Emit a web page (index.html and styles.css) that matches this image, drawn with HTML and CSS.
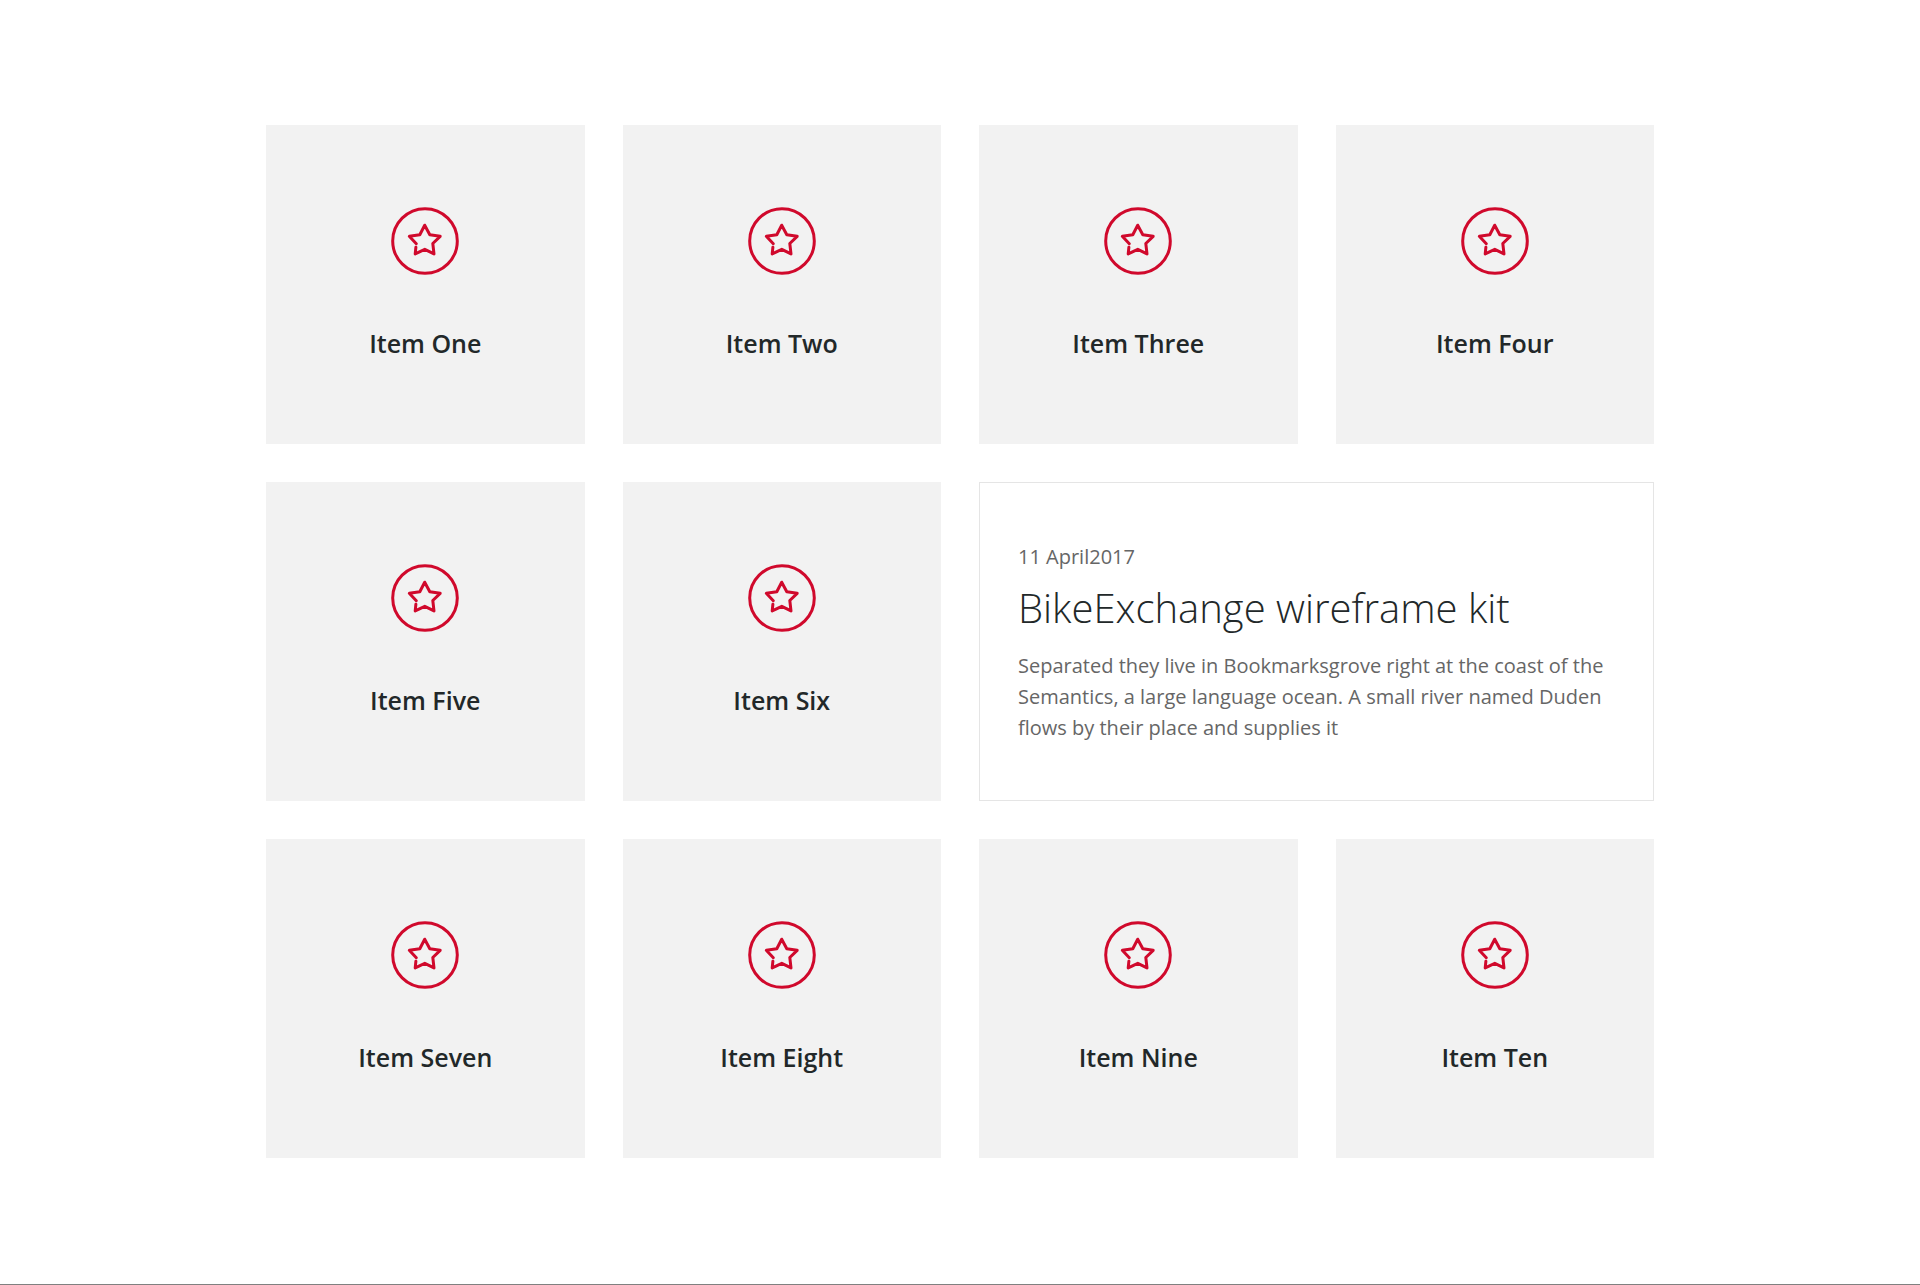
FILE: index.html
```html
<!DOCTYPE html>
<html lang="en">
<head>
<meta charset="utf-8">
<title>Items</title>
<link rel="stylesheet" href="styles.css">
</head>
<body>
<svg class="sprite" aria-hidden="true">
  <symbol id="star" viewBox="0 0 68 68">
    <circle cx="34" cy="34" r="32.3"/>
    <path d="M25.3 36.7 18.3 29.3 28.8 27.7 33.7 18.2 38.8 27.7 49.2 29.3 41.8 36.5 43 46.9 33.8 42.3 24.2 46.9 24.9 40.2"/>
  </symbol>
</svg>
<main class="page">
  <section class="grid">
    <article class="card"><svg class="icon" aria-hidden="true"><use href="#star"/></svg><h2 class="label">Item One</h2></article>
    <article class="card"><svg class="icon" aria-hidden="true"><use href="#star"/></svg><h2 class="label">Item Two</h2></article>
    <article class="card"><svg class="icon" aria-hidden="true"><use href="#star"/></svg><h2 class="label">Item Three</h2></article>
    <article class="card"><svg class="icon" aria-hidden="true"><use href="#star"/></svg><h2 class="label">Item Four</h2></article>
    <article class="card"><svg class="icon" aria-hidden="true"><use href="#star"/></svg><h2 class="label">Item Five</h2></article>
    <article class="card"><svg class="icon" aria-hidden="true"><use href="#star"/></svg><h2 class="label">Item Six</h2></article>
    <article class="feature">
      <time class="date" datetime="2017-04-11">11 April2017</time>
      <h2 class="title">BikeExchange wireframe kit</h2>
      <p class="text">Separated they live in Bookmarksgrove right at the coast of the Semantics, a large language ocean. A small river named Duden flows by their place and supplies it</p>
    </article>
    <article class="card"><svg class="icon" aria-hidden="true"><use href="#star"/></svg><h2 class="label">Item Seven</h2></article>
    <article class="card"><svg class="icon" aria-hidden="true"><use href="#star"/></svg><h2 class="label">Item Eight</h2></article>
    <article class="card"><svg class="icon" aria-hidden="true"><use href="#star"/></svg><h2 class="label">Item Nine</h2></article>
    <article class="card"><svg class="icon" aria-hidden="true"><use href="#star"/></svg><h2 class="label">Item Ten</h2></article>
  </section>
</main>
</body>
</html>
```
FILE: styles.css
```css
* {
  box-sizing: border-box;
}

body {
  margin: 0;
  background: #fff;
  color: #222829;
  font-family: "Open Sans", sans-serif;
}

h2,
p {
  margin: 0;
}

.sprite {
  display: none;
}

.page {
  display: flex;
  flex-direction: column;
  min-height: 100vh;
  padding: 125px 24px 120px;
  border-bottom: 1px solid #808080;
}

.grid {
  display: grid;
  grid-template-columns: repeat(4, minmax(0, 1fr));
  grid-auto-rows: minmax(319px, auto);
  gap: 38px;
  width: 100%;
  max-width: 1388px;
  margin: 0 auto;
}

.card {
  display: flex;
  flex-direction: column;
  align-items: center;
  justify-content: center;
  gap: 50px;
  background: #f2f2f2;
}

.icon {
  width: 68px;
  height: 68px;
  fill: none;
  stroke: #d0092c;
  stroke-width: 3;
  stroke-linejoin: round;
  stroke-linecap: round;
}

.label {
  padding-bottom: 2px;
  font-size: 25px;
  line-height: 36px;
  font-weight: 600;
}

.feature {
  display: flex;
  flex-direction: column;
  justify-content: center;
  grid-column: span 2;
  padding: 0 38px;
  border: 1px solid #e5e5e5;
}

.date,
.text {
  font-size: 20px;
  line-height: 31px;
  font-weight: 400;
  color: #666;
}

.title {
  margin: 12px 0 18px;
  font-size: 40px;
  line-height: 48px;
  font-weight: 300;
}
```
